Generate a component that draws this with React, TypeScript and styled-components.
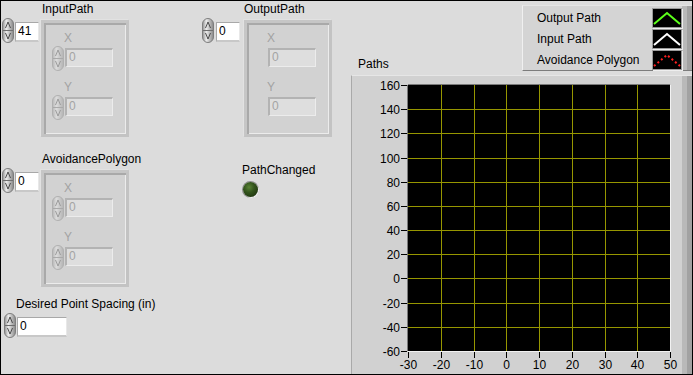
import React, { useId } from "react";
import styled, { createGlobalStyle } from "styled-components";

const GlobalStyle = createGlobalStyle`
  html, body {
    margin: 0;
    padding: 0;
    background: #dcdcdc;
  }
  body {
    font-family: "Liberation Sans", Arial, sans-serif;
    font-size: 12px;
    color: #000;
  }
`;

const Panel = styled.div`
  width: 693px;
  height: 375px;
  box-sizing: border-box;
  border: 1px solid #000;
  background: #dcdcdc;
  display: flex;
  overflow: hidden;
`;

const Column = styled.div<{ $width: number }>`
  width: ${(p) => p.$width}px;
  display: flex;
  flex-direction: column;
  align-items: flex-start;
`;

const Label = styled.div<{ $indent?: number; $top?: number }>`
  line-height: 14px;
  height: 14px;
  white-space: nowrap;
  padding-left: ${(p) => p.$indent ?? 0}px;
  margin-top: ${(p) => p.$top ?? 0}px;
`;

const Block = styled.div<{ $top?: number; $left?: number }>`
  display: flex;
  flex-direction: column;
  margin-top: ${(p) => p.$top ?? 0}px;
  margin-left: ${(p) => p.$left ?? 0}px;
`;

const ControlRow = styled.div`
  display: flex;
  align-items: flex-start;
  margin-top: 2px;
`;

const NumBox = styled.div<{ $width: number; $gap: number }>`
  box-sizing: border-box;
  width: ${(p) => p.$width}px;
  height: 20px;
  margin-left: ${(p) => p.$gap}px;
  margin-top: 4px;
  background: #fff;
  border-top: 1px solid #a8a8a8;
  border-left: 1px solid #a8a8a8;
  border-bottom: 2px solid #c8c8c8;
  border-right: 1px solid #e8e8e8;
  padding-left: 2px;
  line-height: 17px;
  color: #000;
`;

const ClusterFrame = styled.div<{ $gap: number }>`
  box-sizing: border-box;
  width: 88px;
  height: 117px;
  margin-left: ${(p) => p.$gap}px;
  margin-top: 2px;
  background: #d2d2d2;
  border: 3px solid #c3c3c3;
  border-top-color: #c6c6c6;
  border-left-color: #c6c6c6;
  box-shadow: inset 2px 2px 0 #a9a9a9, inset -1px -1px 0 #ececec,
    -1px -1px 0 #e2e2e2;
  padding: 8px 0 0 8px;
  display: flex;
  flex-direction: column;
  gap: 9px;
`;

const Element = styled.div`
  display: flex;
  flex-direction: column;
`;

const ElementLabel = styled.div`
  line-height: 14px;
  height: 14px;
  padding-left: 12px;
  color: #a2a2a2;
`;

const ElementRow = styled.div`
  display: flex;
  align-items: flex-start;
  margin-top: 1px;
`;

const GhostBox = styled.div`
  box-sizing: border-box;
  width: 48px;
  height: 19px;
  margin-left: 1px;
  margin-top: 2px;
  background: #dedede;
  border-top: 2px solid #b3b3b3;
  border-left: 2px solid #b3b3b3;
  border-bottom: 1px solid #ececec;
  border-right: 1px solid #ececec;
  padding-left: 2px;
  line-height: 15px;
  color: #a4a4a4;
`;

const SpinnerSlot = styled.div`
  width: 12px;
  height: 25px;
`;

const Led = styled.div`
  width: 15px;
  height: 15px;
  margin-top: 5px;
  margin-left: 1px;
  border-radius: 50%;
  background: radial-gradient(
    circle at 40% 35%,
    #5a8436 0%,
    #33541c 40%,
    #17280b 100%
  );
  box-shadow: 1px 1px 0 #f2f2f2, 0 0 0 1px #8c8c8c;
`;

const RightArea = styled.div`
  flex: 1;
  display: flex;
  flex-direction: column;
`;

const TopRow = styled.div`
  display: flex;
  align-items: flex-end;
  justify-content: space-between;
`;

const Legend = styled.div`
  box-sizing: border-box;
  width: 170px;
  height: 66px;
  margin-top: 4px;
  background: #d4d4d4;
  border-left: 1px solid #f0f0f0;
  border-top: 1px solid #e4e4e4;
  border-bottom: 1px solid #7c7c7c;
  box-shadow: inset -5px 0 0 #a2a2a2, inset -10px 0 0 #b9b9b9;
  padding-top: 1px;
  display: flex;
  flex-direction: column;
`;

const LegendRow = styled.div`
  height: 22px;
  display: flex;
  align-items: center;
  padding-left: 14px;
`;

const LegendText = styled.span`
  flex: 1;
  line-height: 14px;
`;

const Swatch = styled.svg`
  display: block;
  margin-right: 11px;
  background: #000;
  box-shadow: 0 0 0 1px #9a9a9a, 1px 1px 0 1px #eeeeee;
`;

const GraphFrame = styled.div`
  flex: 1;
  margin-top: 4px;
  margin-left: 1px;
  background: #d1d1d1;
  border-left: 1px solid #a9a9a9;
  border-top: 1px solid #e6e6e6;
  box-shadow: inset -5px 0 0 #a2a2a2, inset -10px 0 0 #b9b9b9;
`;

function Spinner({ disabled }: { disabled?: boolean }) {
  const id = useId();
  return (
    <svg
      width="12"
      height="25"
      viewBox="0 0 12 25"
      style={{ display: "block", opacity: disabled ? 0.4 : 1 }}
    >
      <defs>
        <linearGradient id={id} x1="0" x2="1" y1="0" y2="0">
          <stop offset="0" stopColor="#8f8f8f" />
          <stop offset="0.35" stopColor="#ececec" />
          <stop offset="1" stopColor="#868686" />
        </linearGradient>
      </defs>
      <rect
        x="0.5"
        y="0.5"
        width="11"
        height="24"
        rx="5.5"
        fill={`url(#${id})`}
        stroke="#7e7e7e"
      />
      <line x1="1" x2="11" y1="12.5" y2="12.5" stroke="#6e6e6e" />
      <path d="M3.5 10 L6 4 L8.5 10" fill="none" stroke="#4a4a4a" />
      <path d="M3.5 15 L6 21 L8.5 15" fill="none" stroke="#4a4a4a" />
    </svg>
  );
}

function ClusterElement({ name, indicator }: { name: string; indicator?: boolean }) {
  return (
    <Element>
      <ElementLabel>{name}</ElementLabel>
      <ElementRow>
        {indicator ? <SpinnerSlot /> : <Spinner disabled />}
        <GhostBox>0</GhostBox>
      </ElementRow>
    </Element>
  );
}

function ArrayControl({
  name,
  index,
  indicator,
  top,
  left,
  labelIndent,
  boxGap,
  frameGap,
}: {
  name: string;
  index: string;
  indicator?: boolean;
  top: number;
  left: number;
  labelIndent: number;
  boxGap: number;
  frameGap: number;
}) {
  return (
    <Block $top={top} $left={left}>
      <Label $indent={labelIndent}>{name}</Label>
      <ControlRow>
        <Spinner />
        <NumBox $width={24} $gap={boxGap}>
          {index}
        </NumBox>
        <ClusterFrame $gap={frameGap}>
          <ClusterElement name="X" indicator={indicator} />
          <ClusterElement name="Y" indicator={indicator} />
        </ClusterFrame>
      </ControlRow>
    </Block>
  );
}

function Chevron({ color, dotted }: { color: string; dotted?: boolean }) {
  return (
    <Swatch width="28" height="18" viewBox="0 0 28 18">
      <polyline
        points="1,15 14,4 27,15"
        fill="none"
        stroke={color}
        strokeWidth="2"
        strokeDasharray={dotted ? "2 2.6" : undefined}
      />
    </Swatch>
  );
}

const yTicks = [160, 140, 120, 100, 80, 60, 40, 20, 0, -20, -40, -60];
const xTicks = [-30, -20, -10, 0, 10, 20, 30, 40, 50];
const PL = 56;
const PT = 9;
const PW = 262;
const PH = 266;
const yPos = (v: number) => PT + ((160 - v) / 220) * PH;
const xPos = (v: number) => PL + ((v + 30) / 80) * PW;

function Chart() {
  return (
    <svg width="330" height="298" style={{ display: "block" }}>
      <rect x={PL} y={PT} width={PW} height={PH} fill="#000" />
      {yTicks.slice(1, -1).map((v) => (
        <line
          key={`h${v}`}
          x1={PL}
          x2={PL + PW}
          y1={Math.round(yPos(v)) + 0.5}
          y2={Math.round(yPos(v)) + 0.5}
          stroke="#969600"
        />
      ))}
      {xTicks.slice(1, -1).map((v) => (
        <line
          key={`v${v}`}
          y1={PT}
          y2={PT + PH}
          x1={Math.round(xPos(v)) + 0.5}
          x2={Math.round(xPos(v)) + 0.5}
          stroke="#969600"
        />
      ))}
      <line x1={PL - 0.5} x2={PL - 0.5} y1={PT} y2={PT + PH} stroke="#7a7a7a" />
      <line x1={PL} x2={PL + PW} y1={PT - 0.5} y2={PT - 0.5} stroke="#7a7a7a" />
      <line x1={PL + PW + 0.5} x2={PL + PW + 0.5} y1={PT} y2={PT + PH + 1} stroke="#f2f2f2" />
      <line x1={PL} x2={PL + PW} y1={PT + PH + 0.5} y2={PT + PH + 0.5} stroke="#f2f2f2" />
      <g fontFamily="Liberation Sans, Arial, sans-serif" fontSize="12" fill="#000">
        {yTicks.map((v) => {
          const y = Math.round(yPos(v)) + 0.5;
          return (
            <g key={`yt${v}`}>
              <line x1={PL - 7} x2={PL - 1} y1={y} y2={y} stroke="#000" />
              <text x={PL - 8} y={y + 4} textAnchor="end">
                {v}
              </text>
            </g>
          );
        })}
        {xTicks.map((v) => {
          const x = Math.round(xPos(v)) + 0.5;
          return (
            <g key={`xt${v}`}>
              <line x1={x} x2={x} y1={PT + PH + 1} y2={PT + PH + 7} stroke="#000" />
              <text x={x} y={PT + PH + 18} textAnchor="middle">
                {v}
              </text>
            </g>
          );
        })}
      </g>
    </svg>
  );
}

export default function App() {
  return (
    <>
      <GlobalStyle />
      <Panel>
        <Column $width={200}>
          <ArrayControl
            name="InputPath"
            index="41"
            top={1}
            left={1}
            labelIndent={40}
            boxGap={1}
            frameGap={2}
          />
          <ArrayControl
            name="AvoidancePolygon"
            index="0"
            top={15}
            left={1}
            labelIndent={40}
            boxGap={1}
            frameGap={2}
          />
          <Block $top={10} $left={3}>
            <Label $indent={12}>Desired Point Spacing (in)</Label>
            <ControlRow>
              <Spinner />
              <NumBox $width={50} $gap={1}>
                0
              </NumBox>
            </ControlRow>
          </Block>
        </Column>
        <Column $width={149}>
          <ArrayControl
            name="OutputPath"
            index="0"
            indicator
            top={1}
            left={1}
            labelIndent={42}
            boxGap={2}
            frameGap={4}
          />
          <Block $top={26} $left={41}>
            <Label>PathChanged</Label>
            <Led />
          </Block>
        </Column>
        <RightArea>
          <TopRow>
            <Label $indent={8}>Paths</Label>
            <Legend>
              <LegendRow>
                <LegendText>Output Path</LegendText>
                <Chevron color="#5cff1a" />
              </LegendRow>
              <LegendRow>
                <LegendText>Input Path</LegendText>
                <Chevron color="#ffffff" />
              </LegendRow>
              <LegendRow>
                <LegendText>Avoidance Polygon</LegendText>
                <Chevron color="#ff2020" dotted />
              </LegendRow>
            </Legend>
          </TopRow>
          <GraphFrame>
            <Chart />
          </GraphFrame>
        </RightArea>
      </Panel>
    </>
  );
}
